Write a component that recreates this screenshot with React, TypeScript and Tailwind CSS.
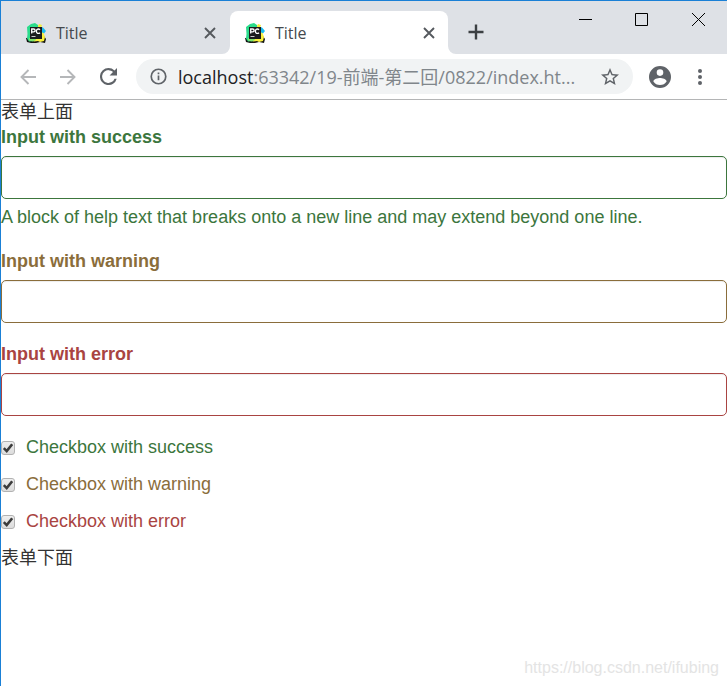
import React from "react";

type Status = "success" | "warning" | "error";

const textColor: Record<Status, string> = {
  success: "text-[#3c763d]",
  warning: "text-[#8a6d3b]",
  error: "text-[#a94442]",
};

const borderColor: Record<Status, string> = {
  success: "border-[#3c763d]",
  warning: "border-[#8a6d3b]",
  error: "border-[#a94442]",
};

function Favicon() {
  return (
    <svg viewBox="0 0 20 20" className="size-5 shrink-0" aria-hidden="true">
      <path d="M0 15l1 4 4 1h5l4-1 5 1 1-4-2-3z" fill="#151510" />
      <path d="M1 4l4-3 4-1 3 2v3H5v10l3 3-5 .5-2-3L1.500 11z" fill="#2bdc8c" />
      <path d="M12 3l1-2 3 1-1 3h-3z" fill="#f4ee3a" />
      <path d="M15 4l2 .5L20 8l-2 2.500-3-1z" fill="#19bdf0" />
      <path d="M15 9l2.500 1 1.500 4-1 4-4 1-2-1-4 .500-2-2.500h8z" fill="#fbf03c" />
      <path d="M3 15h6l1 2-3 1.500-4-1z" fill="#7fe36a" />
      <rect x="4" y="4" width="12" height="12" fill="#1c1c1e" />
      <path d="M5.700 10.500V6h2a1.400 1.400 0 0 1 0 2.800h-2M14 6.800c-1.500-1.500-3.600-.7-3.600 1.400s2.100 3 3.600 1.500" fill="none" stroke="#fff" strokeWidth="1.300" />
      <path d="M5.500 13.500h4" stroke="#ccc" />
    </svg>
  );
}

function Tab({ active = false }: { active?: boolean }) {
  return (
    <div
      className={
        "relative flex h-[43px] w-[218px] shrink-0 items-center rounded-t-lg pl-[15px] pr-[11px] " +
        (active ? "bg-white" : "")
      }
    >
      {active && (
        <>
          <svg viewBox="0 0 8 8" className="absolute bottom-0 -left-2 size-2" aria-hidden="true">
            <path d="M8 0v8H0a8 8 0 0 0 8-8z" fill="#fff" />
          </svg>
          <svg viewBox="0 0 8 8" className="absolute bottom-0 -right-2 size-2" aria-hidden="true">
            <path d="M0 0v8h8a8 8 0 0 1-8-8z" fill="#fff" />
          </svg>
        </>
      )}
      <Favicon />
      <span className="ml-2.5 flex-1 text-base text-[#45494d]">Title</span>
      <button type="button" aria-label="Close tab" className="flex size-4 items-center justify-center">
        <svg viewBox="0 0 12 12" className="size-3" fill="none" stroke="#55595e" strokeWidth="1.900">
          <path d="M1 1l10 10M11 1 1 11" />
        </svg>
      </button>
    </div>
  );
}

function TabStrip() {
  return (
    <header className="flex h-[53px] items-end bg-[#dee1e6] pl-2.5">
      <div className="flex gap-px">
        <Tab />
        <Tab active />
      </div>
      <button type="button" aria-label="New tab" className="mb-2.5 ml-4 flex size-6 shrink-0 items-center justify-center">
        <svg viewBox="0 0 16 16" className="size-4" fill="none" stroke="#3c4043" strokeWidth="2.400">
          <path d="M8 .5v15M.5 8h15" />
        </svg>
      </button>
      <div className="ml-auto flex self-start">
        <button type="button" aria-label="Minimize" className="flex h-[37px] w-14 items-center justify-center">
          <svg viewBox="0 0 13 13" className="size-[13px]" stroke="#000"><path d="M0 6.500h13" /></svg>
        </button>
        <button type="button" aria-label="Maximize" className="flex h-[37px] w-14 items-center justify-center">
          <svg viewBox="0 0 13 13" className="size-[13px]" fill="none" stroke="#000"><path d="M.5.5h12v12H.5z" /></svg>
        </button>
        <button type="button" aria-label="Close window" className="flex h-[37px] w-[58px] items-center justify-center">
          <svg viewBox="0 0 13 13" className="size-[13px]" stroke="#000"><path d="M0 0l13 13M13 0 0 13" /></svg>
        </button>
      </div>
    </header>
  );
}

function Toolbar() {
  return (
    <nav className="flex h-[46px] items-center border-b border-[#b4b5b6] pl-[15px] pr-4">
      <div className="flex gap-4">
        <button type="button" aria-label="Back" className="flex size-6 items-center justify-center">
          <svg viewBox="0 0 16 16" className="size-4" fill="none" stroke="#b5b7b9" strokeWidth="1.900">
            <path d="M16 8H1.500M8.500 1l-7 7 7 7" />
          </svg>
        </button>
        <button type="button" aria-label="Forward" className="flex size-6 items-center justify-center">
          <svg viewBox="0 0 16 16" className="size-4" fill="none" stroke="#b5b7b9" strokeWidth="1.900">
            <path d="M0 8h14.500M7.500 1l7 7-7 7" />
          </svg>
        </button>
        <button type="button" aria-label="Reload" className="flex size-6 items-center justify-center">
          <svg viewBox="4 4 16 16" className="size-[17px]" fill="#5f6368">
            <path d="M17.650 6.350A7.960 7.960 0 0 0 12 4a8 8 0 1 0 7.730 10h-2.080A6 6 0 1 1 12 6c1.660 0 3.140.69 4.220 1.780L13 11h7V4z" />
          </svg>
        </button>
      </div>
      <div className="ml-4 flex h-[35px] min-w-0 flex-1 items-center rounded-full bg-[#f1f3f4] px-3.5">
        <svg viewBox="0 0 18 18" className="size-[17px] shrink-0" fill="none" stroke="#5f6368" strokeWidth="1.800" aria-hidden="true">
          <circle cx="9" cy="9" r="7.700" />
          <path d="M9 8v5M9 4.800v1.800" />
        </svg>
        <p className="ml-[11px] min-w-0 flex-1 text-lg whitespace-nowrap text-[#80868b]">
          <span className="text-[#202124]">localhost</span>:63342/19-前端-第二回/0822/index.ht...
        </p>
        <button type="button" aria-label="Bookmark this page" className="shrink-0">
          <svg viewBox="2 2 20 20" className="size-[18px]" fill="#5f6368">
            <path d="M22 9.240l-7.190-.62L12 2 9.190 8.630 2 9.240l5.460 4.730L5.820 21 12 17.270 18.180 21l-1.630-7.030zM12 15.400l-3.760 2.270 1-4.280-3.320-2.880 4.380-.38L12 6.100l1.710 4.040 4.380.38-3.320 2.880 1 4.280z" />
          </svg>
        </button>
      </div>
      <button type="button" aria-label="Profile" className="ml-4 shrink-0">
        <svg viewBox="2 2 20 20" className="size-[22px]" fill="#5f6368">
          <path d="M12 2a10 10 0 1 0 0 20 10 10 0 0 0 0-20zm0 3a3 3 0 1 1 0 6 3 3 0 0 1 0-6zm0 14.200a7.200 7.200 0 0 1-6-3.220c.03-1.990 4-3.080 6-3.080s5.970 1.090 6 3.080a7.200 7.200 0 0 1-6 3.220z" />
        </svg>
      </button>
      <button type="button" aria-label="Menu" className="ml-[18px] flex h-6 w-[22px] shrink-0 items-center justify-center">
        <svg viewBox="0 0 4 16" className="h-4 w-1" fill="#5f6368">
          <circle cx="2" cy="2" r="2" /><circle cx="2" cy="8" r="2" /><circle cx="2" cy="14" r="2" />
        </svg>
      </button>
    </nav>
  );
}

function TextField({ id, status, label, help }: { id: string; status: Status; label: string; help?: string }) {
  return (
    <div className={"mb-[19px] " + textColor[status]}>
      <label htmlFor={id} className="mb-1.5 block font-bold">{label}</label>
      <input
        id={id}
        type="text"
        aria-describedby={help ? id + "-help" : undefined}
        className={
          "block h-[43px] w-full rounded-[5px] border bg-white px-4 text-[#555] shadow-[inset_0_1px_1px_rgba(0,0,0,0.075)] outline-none " +
          borderColor[status]
        }
      />
      {help && <p id={id + "-help"} className="mt-1.5">{help}</p>}
    </div>
  );
}

function CheckField({ status, label }: { status: Status; label: string }) {
  return (
    <label className={"flex items-center " + textColor[status]}>
      <span className="grid size-3.5 shrink-0">
        <input
          type="checkbox"
          defaultChecked
          className="peer col-start-1 row-start-1 size-3.5 appearance-none rounded-[3px] border border-[#b2b2b2] bg-linear-to-b from-[#eeeeee] to-[#dcdcdc]"
        />
        <svg viewBox="0 0 14 14" className="pointer-events-none invisible col-start-1 row-start-1 size-3.5 peer-checked:visible" fill="none" stroke="#3c3c3c" strokeWidth="2.600" aria-hidden="true">
          <path d="M2.800 7.200l2.900 2.900L11.200 3.200" />
        </svg>
      </span>
      <span className="ml-[11px]">{label}</span>
    </label>
  );
}

export default function App() {
  return (
    <div className="relative flex min-h-screen flex-col border-t border-l border-[#1a80d6] bg-white font-['Open_Sans','Noto_Sans_CJK_SC',sans-serif]">
      <TabStrip />
      <Toolbar />
      <main className="font-['Liberation_Sans','Noto_Sans_CJK_SC',sans-serif] text-lg leading-[25px] text-[#333]">
        <p>表单上面</p>
        <form>
          <TextField
            id="input-success"
            status="success"
            label="Input with success"
            help="A block of help text that breaks onto a new line and may extend beyond one line."
          />
          <TextField id="input-warning" status="warning" label="Input with warning" />
          <TextField id="input-error" status="error" label="Input with error" />
          <div className="mb-3 flex flex-col gap-3">
            <CheckField status="success" label="Checkbox with success" />
            <CheckField status="warning" label="Checkbox with warning" />
            <CheckField status="error" label="Checkbox with error" />
          </div>
        </form>
        <p>表单下面</p>
      </main>
      <p className="absolute right-2 bottom-2 font-['Liberation_Sans',sans-serif] text-base leading-5 text-[#e4e4e4]">
        https://blog.csdn.net/ifubing
      </p>
    </div>
  );
}
